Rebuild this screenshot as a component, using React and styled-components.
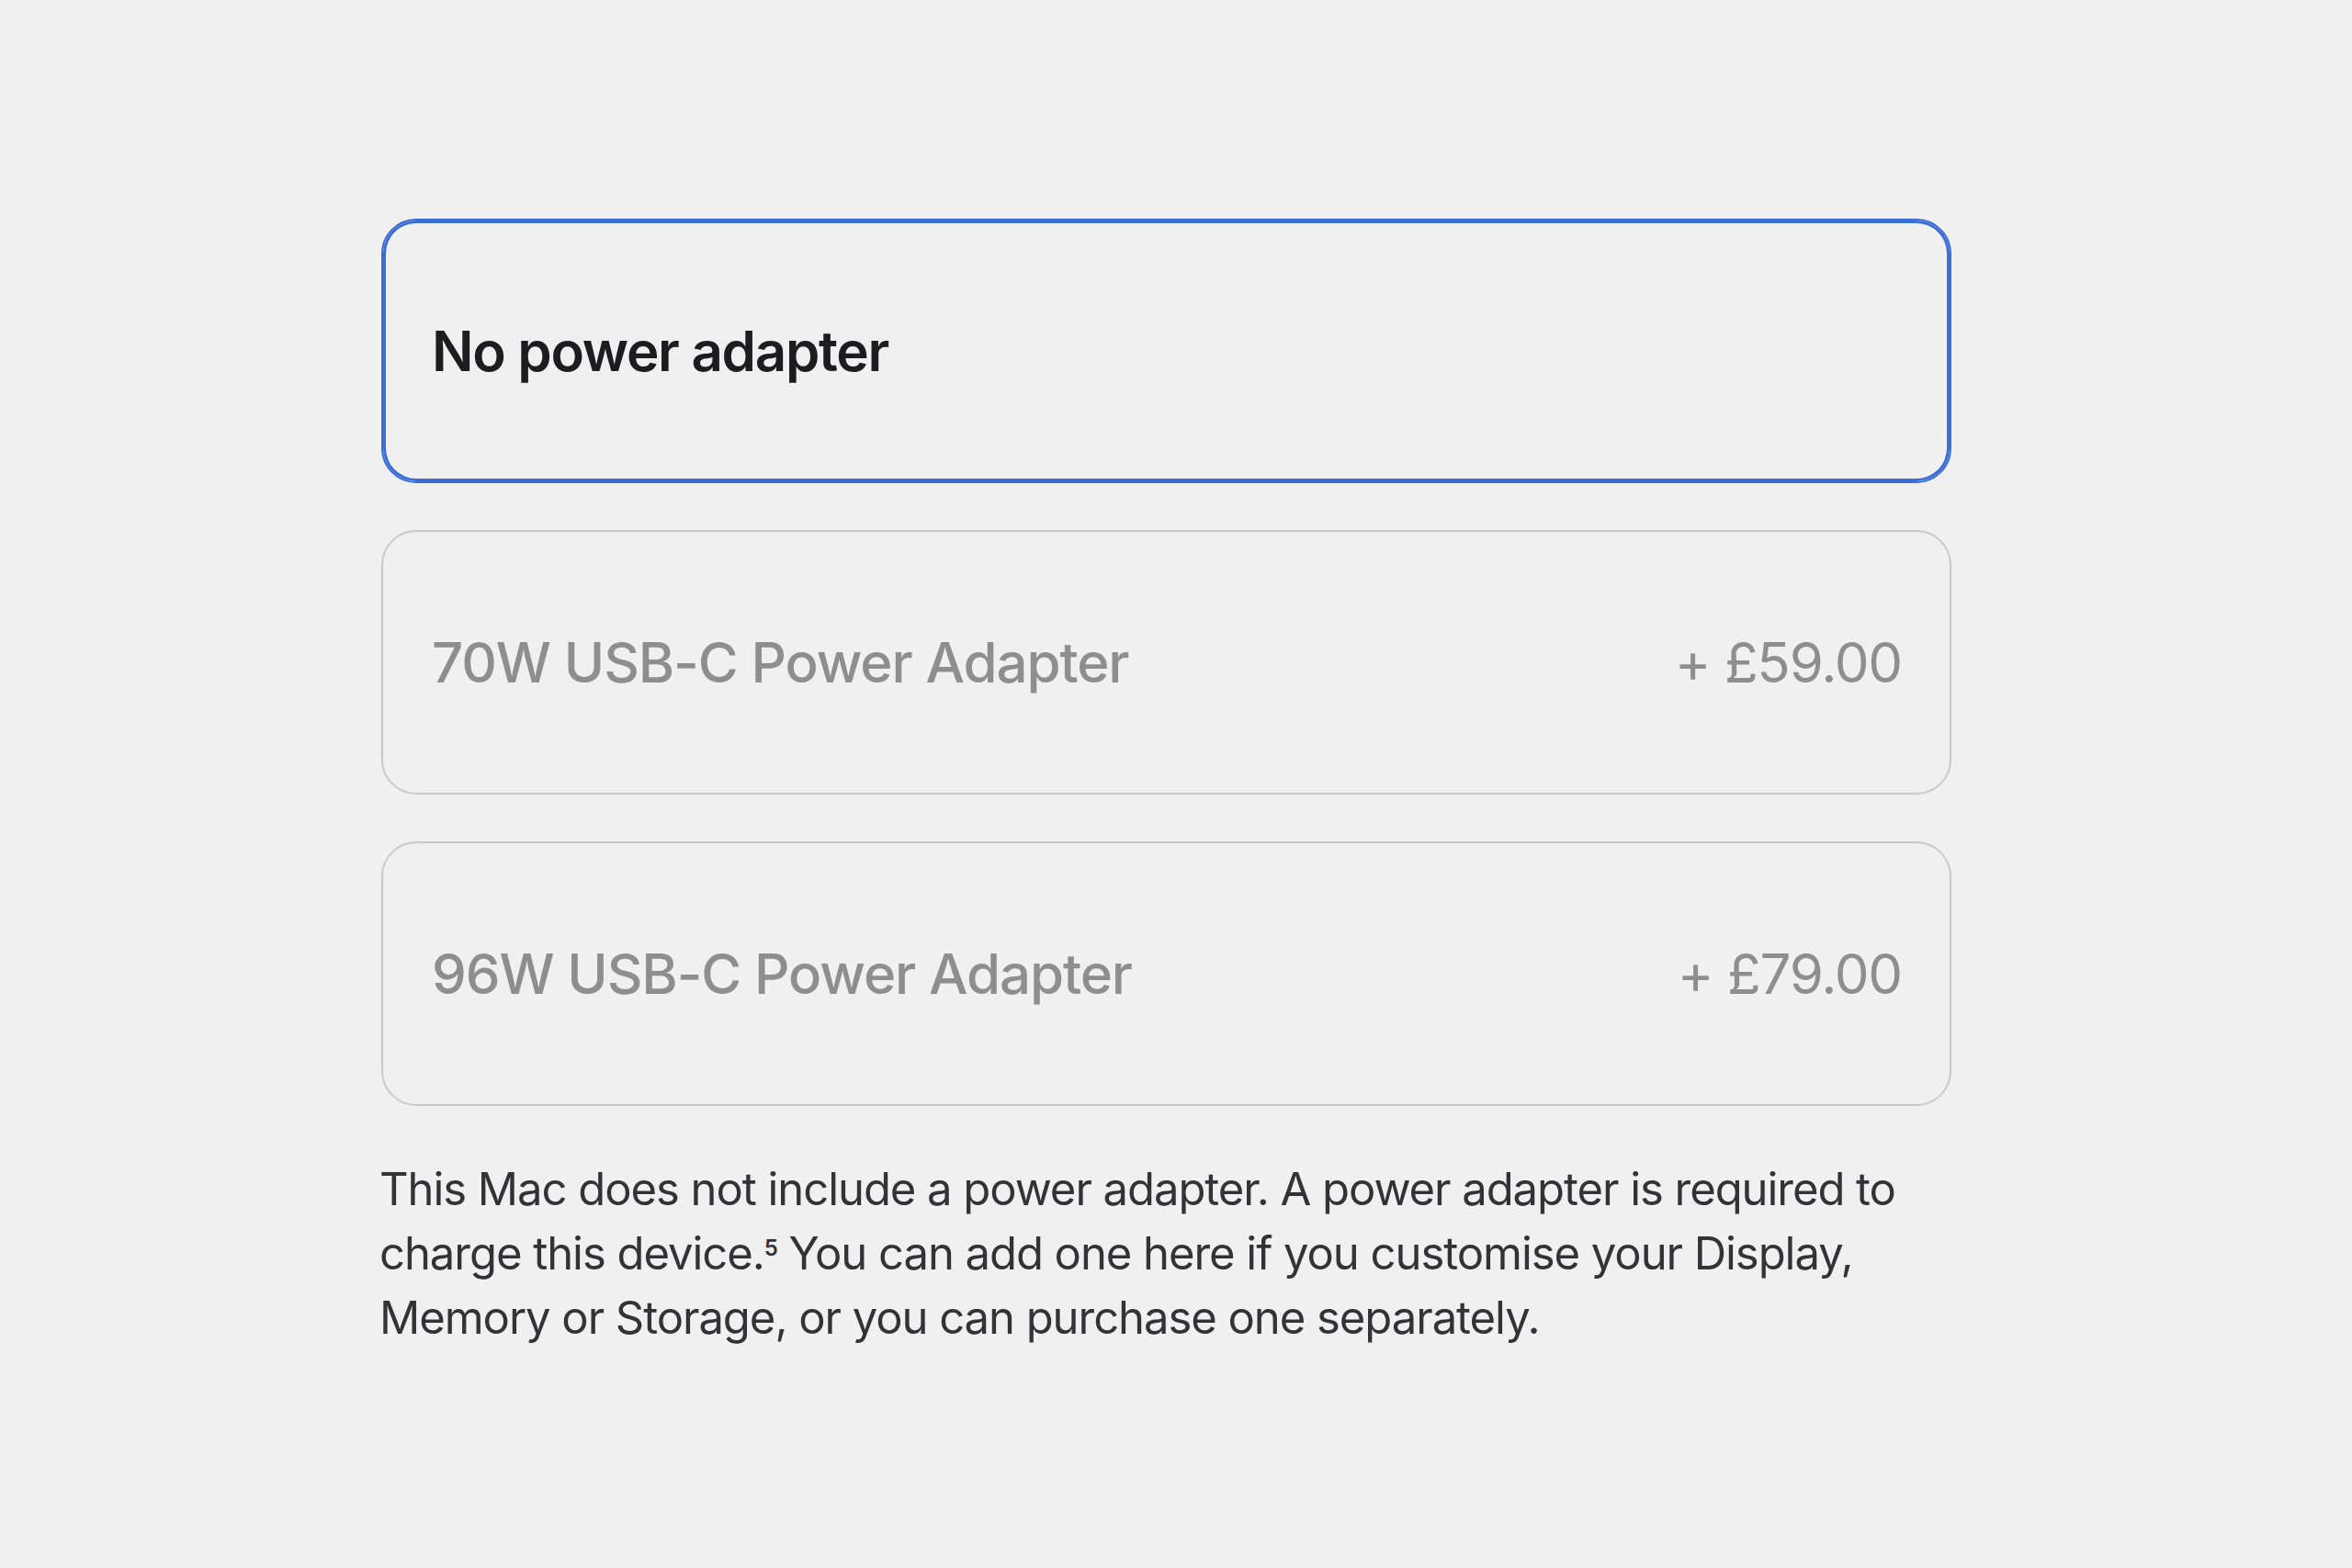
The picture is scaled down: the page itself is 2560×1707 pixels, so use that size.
import React, { useState } from "react";
import styled, { createGlobalStyle } from "styled-components";

const GlobalStyle = createGlobalStyle`
  html, body {
    margin: 0;
    padding: 0;
    background: #f0f0f0;
  }
  body {
    font-family: Inter, "Liberation Sans", Arial, sans-serif;
    -webkit-font-smoothing: antialiased;
  }
`;

const options = [
  { id: "none", label: "No power adapter", price: null },
  { id: "70w", label: "70W USB-C Power Adapter", price: "+ £59.00" },
  { id: "96w", label: "96W USB-C Power Adapter", price: "+ £79.00" },
];

function App() {
  const [selected, setSelected] = useState("none");

  return (
    <Page>
      <GlobalStyle />
      <Section>
        <OptionList>
          {options.map((opt) => (
            <Option
              key={opt.id}
              $selected={selected === opt.id}
              onClick={() => setSelected(opt.id)}
            >
              <OptionLabel $selected={selected === opt.id}>{opt.label}</OptionLabel>
              {opt.price && <OptionPrice>{opt.price}</OptionPrice>}
            </Option>
          ))}
        </OptionList>

        <Note>
          This Mac does not include a power adapter. A power adapter is required to
          charge this device.<sup>5</sup> You can add one here if you customise your Display,
          Memory or Storage, or you can purchase one separately.
        </Note>
      </Section>
    </Page>
  );
}

const Page = styled.div`
  min-height: 1707px;
  padding: 238px 0 0 415px;
  box-sizing: border-box;
`;

const Section = styled.div`
  width: 1709px;
  display: flex;
  flex-direction: column;
`;

const OptionList = styled.div`
  display: flex;
  flex-direction: column;
  gap: 51px;
`;

const Option = styled.div`
  height: 288px;
  box-sizing: border-box;
  display: flex;
  align-items: center;
  justify-content: space-between;
  padding: 0 52px 0 53px;
  border: 2px solid ${(p) => (p.$selected ? "#3a6dd6" : "#c9c9c9")};
  box-shadow: ${(p) => (p.$selected ? "inset 0 0 0 3px #3a6dd6" : "none")};
  border-radius: 38px;
  cursor: pointer;
`;

const OptionLabel = styled.span`
  font-size: 60px;
  font-weight: ${(p) => (p.$selected ? 600 : 500)};
  letter-spacing: ${(p) => (p.$selected ? "-1.3px" : "-1.1px")};
  color: ${(p) => (p.$selected ? "#1d1d1f" : "#8e8e8e")};
`;

const OptionPrice = styled.span`
  font-size: 60px;
  font-weight: 400;
  letter-spacing: -1.2px;
  color: #8e8e8e;
`;

const Note = styled.p`
  margin: 56px 0 0 -2px;
  width: 1700px;
  font-size: 49px;
  line-height: 70px;
  font-weight: 400;
  letter-spacing: -1.05px;
  color: #333336;

  & sup {
    font-size: 24px;
    font-weight: 600;
    line-height: 0;
    vertical-align: 15px;
  }
`;

export default App;
